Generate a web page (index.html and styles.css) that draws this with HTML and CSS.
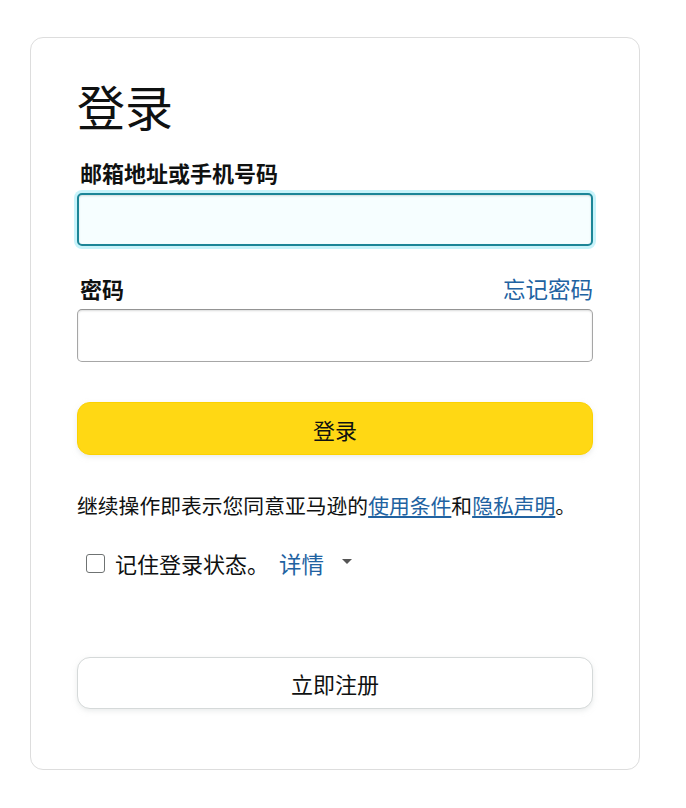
FILE: index.html
```html
<!DOCTYPE html>
<html lang="zh-CN">
<head>
<meta charset="utf-8">
<title>登录</title>
<link rel="stylesheet" href="styles.css">
</head>
<body>
<div class="page">
  <div class="card">
    <h1 class="title">登录</h1>
    <div class="field">
      <label class="label">邮箱地址或手机号码</label>
      <div class="input input-focus"></div>
    </div>
    <div class="field field-pw">
      <div class="label-row">
        <label class="label">密码</label>
        <a class="link">忘记密码</a>
      </div>
      <div class="input"></div>
    </div>
    <button class="btn btn-primary">登录</button>
    <p class="legal">继续操作即表示您同意亚马逊的<a class="ulink">使用条件</a>和<a class="ulink">隐私声明</a>。</p>
    <div class="remember">
      <span class="checkbox"></span>
      <span class="remember-text">记住登录状态。</span>
      <a class="link details">详情</a>
      <span class="caret"></span>
    </div>
    <button class="btn btn-secondary">立即注册</button>
  </div>
</div>
</body>
</html>
```
FILE: styles.css
```css
* { box-sizing: border-box; }
html, body { margin: 0; padding: 0; background: #fff; }
body {
  font-family: "Noto Sans CJK SC", "Noto Sans", sans-serif;
  color: #0f1111;
}
.page {
  padding: 37px 0 0 30px;
}
.card {
  width: 610px;
  height: 733px;
  border: 1px solid #dddddd;
  border-radius: 13px;
  padding: 38px 46px 0 46px;
  display: flex;
  flex-direction: column;
}
.title {
  margin: 0;
  font-size: 48px;
  font-weight: 400;
  line-height: 58px;
}
.field { display: flex; flex-direction: column; }
.field:first-of-type { margin-top: 23px; }
.label {
  font-size: 22px;
  font-weight: 700;
  line-height: 30px;
  padding-left: 3px;
}
.input {
  height: 53px;
  border: 1px solid #a6a6a6;
  border-top-color: #949494;
  border-radius: 5px;
  box-shadow: inset 0 1px 2px rgba(15,17,17,.15);
  margin-top: 6px;
  background: #fff;
}
.input-focus {
  border: 2px solid #1c8597;
  background: #f6feff;
  box-shadow: 0 0 0 3px #c8f3fa, inset 0 1px 2px rgba(15,17,17,.15);
}
.field-pw { margin-top: 27px; }
.label-row {
  display: flex;
  justify-content: space-between;
  align-items: center;
}
.link {
  color: #2162a1;
  font-size: 22.5px;
  line-height: 30px;
  text-decoration: none;
}
.btn {
  display: block;
  width: 100%;
  font-family: inherit;
  font-size: 22px;
  color: #0f1111;
  border-radius: 13px;
  cursor: pointer;
}
.btn-primary {
  margin-top: 40px;
  height: 53px;
  background: #ffd814;
  border: 1px solid #fcd200;
  box-shadow: 0 2px 5px rgba(213,217,217,.5);
}
.legal {
  margin: 35px 0 0 0;
  font-size: 20.8px;
  line-height: 30px;
}
.ulink {
  color: #2162a1;
  text-decoration: underline;
}
.remember {
  margin-top: 28px;
  height: 30px;
  display: flex;
  align-items: center;
  padding-left: 9px;
}
.checkbox {
  width: 19px;
  height: 19px;
  border: 1.5px solid #6f7373;
  border-radius: 3px;
  background: #fff;
}
.remember-text {
  margin-left: 10px;
  font-size: 22px;
  line-height: 30px;
}
.details { margin-left: 10px; }
.caret {
  margin-left: 18px;
  width: 0;
  height: 0;
  border-left: 5px solid transparent;
  border-right: 5px solid transparent;
  border-top: 5px solid #555;
  margin-top: -4px;
}
.btn-secondary {
  margin-top: 79px;
  height: 52px;
  background: #fff;
  border: 1px solid #d5d9d9;
  box-shadow: 0 2px 5px rgba(213,217,217,.5);
}
```
